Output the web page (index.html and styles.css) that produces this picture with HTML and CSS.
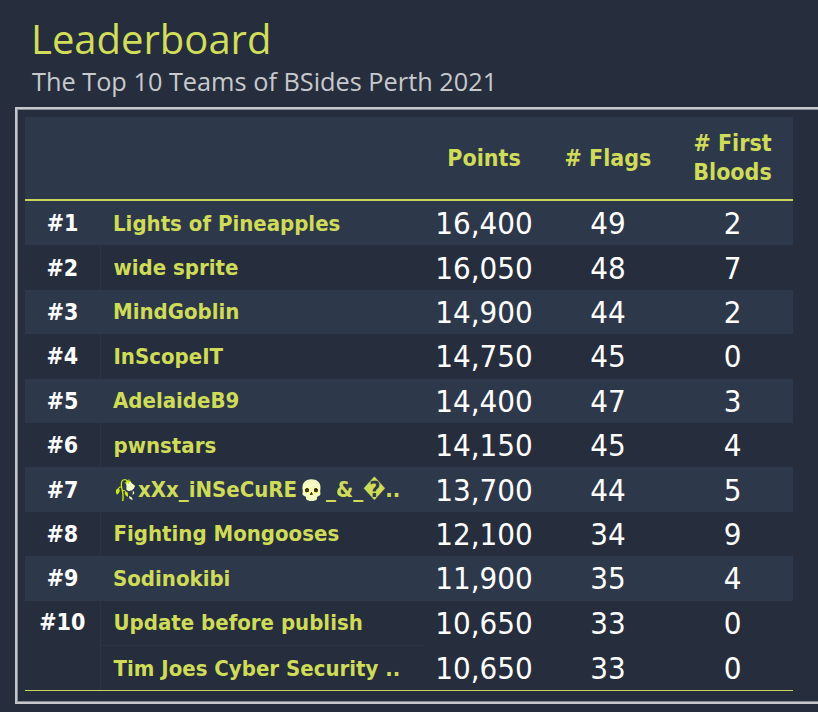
FILE: index.html
```html
<!DOCTYPE html>
<html>
<head>
<meta charset="utf-8">
<link rel="stylesheet" href="styles.css">
</head>
<body>
<div class="page">
  <h1 class="title">Leaderboard</h1>
  <p class="subtitle">The Top 10 Teams of BSides Perth 2021</p>
  <div class="box">
    <table class="board">
      <thead>
        <tr>
          <th class="c-rank"></th>
          <th class="c-name"></th>
          <th class="c-pts">Points</th>
          <th class="c-flags"># Flags</th>
          <th class="c-fb"># First<br>Bloods</th>
        </tr>
      </thead>
      <tbody>
        <tr class="light"><td class="rank">#1</td><td class="name">Lights of Pineapples</td><td class="num">16,400</td><td class="num">49</td><td class="num">2</td></tr>
        <tr class="dark"><td class="rank">#2</td><td class="name">wide sprite</td><td class="num">16,050</td><td class="num">48</td><td class="num">7</td></tr>
        <tr class="light"><td class="rank">#3</td><td class="name">MindGoblin</td><td class="num">14,900</td><td class="num">44</td><td class="num">2</td></tr>
        <tr class="dark"><td class="rank">#4</td><td class="name">InScopeIT</td><td class="num">14,750</td><td class="num">45</td><td class="num">0</td></tr>
        <tr class="light"><td class="rank">#5</td><td class="name">AdelaideB9</td><td class="num">14,400</td><td class="num">47</td><td class="num">3</td></tr>
        <tr class="dark"><td class="rank">#6</td><td class="name">pwnstars</td><td class="num">14,150</td><td class="num">45</td><td class="num">4</td></tr>
        <tr class="light"><td class="rank">#7</td><td class="name"><span class="emo">🥀</span>xXx_iNSeCuRE<span class="emo emo-skull">💀</span>_&amp;_�..</td><td class="num">13,700</td><td class="num">44</td><td class="num">5</td></tr>
        <tr class="dark"><td class="rank">#8</td><td class="name">Fighting Mongooses</td><td class="num">12,100</td><td class="num">34</td><td class="num">9</td></tr>
        <tr class="light"><td class="rank">#9</td><td class="name">Sodinokibi</td><td class="num">11,900</td><td class="num">35</td><td class="num">4</td></tr>
        <tr class="dark split"><td class="rank rank-top" rowspan="2">#10</td><td class="name">Update before publish</td><td class="num">10,650</td><td class="num">33</td><td class="num">0</td></tr>
        <tr class="dark last"><td class="name">Tim Joes Cyber Security ..</td><td class="num">10,650</td><td class="num">33</td><td class="num">0</td></tr>
      </tbody>
    </table>
  </div>
</div>
</body>
</html>
```
FILE: styles.css
```css
html, body {
  margin: 0;
  padding: 0;
  background: #262d3d;
}
.page {
  padding: 14px 12px 0 15px;
  font-family: "Open Sans", "Noto Sans", sans-serif;
}
.title {
  margin: 0 0 0 16px;
  font-size: 40px;
  font-weight: 400;
  line-height: 50px;
  color: #d1de59;
}
.subtitle {
  margin: 0 0 0 17px;
  font-size: 25.3px;
  line-height: 34px;
  color: #c7c9cd;
}
.box {
  margin-top: 9px;
  width: 787px;
  border: 2px solid #c5c7cb;
  box-shadow: inset 0 0 0 1px #868b95;
  padding: 8px 11px 11px 8px;
}
.board {
  width: 768px;
  border-collapse: collapse;
  font-family: "DejaVu Sans Condensed", "DejaVu Sans", sans-serif;
}
.board thead tr {
  background: #2e384b;
}
.board th {
  height: 82px;
  padding: 0;
  border-bottom: 2px solid #c8d65a;
  color: #cfdc58;
  font-size: 23px;
  font-weight: 700;
  line-height: 29px;
  text-align: center;
}
.c-rank { width: 75px; }
.c-name { width: 324px; }
.c-pts { width: 120px; }
.c-flags { width: 128px; }
.c-fb { width: 121px; }
.board td {
  height: 44.4px;
  padding: 0;
  border: 0;
}
.light { background: #2e384b; }
.dark { background: #262d3d; }
.dark .rank { border-right: 1px solid #2c3445; }
.split .name { border-bottom: 1px solid #2c3445; }
.rank {
  color: #ffffff;
  font-weight: 700;
  font-size: 23px;
  text-align: center;
}
.board td.rank-top {
  vertical-align: top;
  padding-top: 8px;
  border-bottom: 1px solid #c8d65a;
}
.board td.name {
  padding-left: 13px;
  color: #cfdc58;
  font-weight: 700;
  font-size: 22px;
  white-space: nowrap;
  overflow: hidden;
}
.emo {
  font-weight: 400;
  font-size: 20px;
  filter: grayscale(1) invert(1) brightness(1.4) sepia(1) saturate(4) hue-rotate(15deg);
}
.emo-skull {
  margin: 0 2px;
  filter: grayscale(1) contrast(1.6) brightness(1.5) sepia(1) saturate(4) hue-rotate(10deg);
}
.num {
  color: #ffffff;
  font-size: 31px;
  text-align: center;
}
.board tr.last td {
  border-bottom: 1px solid #c8d65a;
}
```
